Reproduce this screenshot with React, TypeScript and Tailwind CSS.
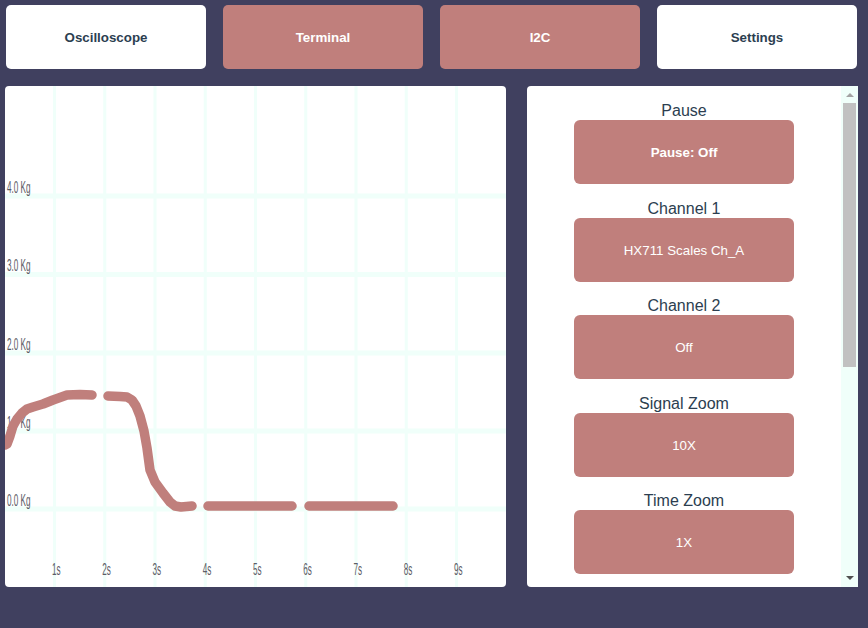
import React from 'react';

const ROSE = '#c07f7c';
const INK = '#2c3e50';

const navItems = [
  { label: 'Oscilloscope', active: false },
  { label: 'Terminal', active: true },
  { label: 'I2C', active: true },
  { label: 'Settings', active: false },
];

const controls = [
  { label: 'Pause', value: 'Pause: Off', bold: true },
  { label: 'Channel 1', value: 'HX711 Scales Ch_A' },
  { label: 'Channel 2', value: 'Off' },
  { label: 'Signal Zoom', value: '10X' },
  { label: 'Time Zoom', value: '1X' },
];

// points are relative to the chart box (501 x 501)
const segments: [number, number][][] = [
  [[0, 359], [2, 358], [5, 350], [8, 340], [12, 333], [17, 327], [22, 323], [28, 321], [38, 318], [48, 314], [62, 309], [75, 308.5], [87, 309]],
  [[103, 310], [115, 310.5], [122, 311], [127, 314], [131, 320], [135, 330], [139, 345], [142, 362], [145, 384], [150, 396], [158, 407], [165, 416], [170, 420], [176, 421], [187, 420]],
  [[203, 420], [287, 420]],
  [[304, 420], [388, 420]],
];

const SQ = 0.48;
const vLines = Array.from({ length: 9 }, (_, i) => 49.5 + i * 50.25);
const hLines = [
  { y: 110, label: '4.0 Kg' },
  { y: 188.5, label: '3.0 Kg' },
  { y: 267, label: '2.0 Kg' },
  { y: 345, label: '1.0 Kg' },
  { y: 423, label: '0.0 Kg' },
];

const Chart = () => (
  <div className="h-[501px] w-[501px] overflow-hidden rounded-[4px] bg-white">
    <svg width="501" height="501" viewBox="0 0 501 501" style={{ fontFamily: '"Liberation Sans", Arial, sans-serif' }}>
      {vLines.map((x) => (
        <rect key={x} x={x - 1.5} y={0} width={3} height={501} fill="#f0fffa" />
      ))}
      {hLines.map((h) => (
        <rect key={h.y} x={0} y={h.y - 2.5} width={501} height={5} fill="#f0fffa" />
      ))}
      <g transform={`scale(${SQ},1)`}>
        {hLines.map((h) => (
          <text key={h.label} x={2 / SQ} y={h.y - 3} fontSize={17} fill="#5c5c66">
            {h.label}
          </text>
        ))}
        {vLines.map((x, i) => (
          <text key={i} x={(x - 2.5) / SQ} y={489} fontSize={17} fill="#5c5c66">
            {i + 1}s
          </text>
        ))}
      </g>
      {segments.map((pts, i) => (
        <polyline
          key={i}
          points={pts.map((p) => p.join(',')).join(' ')}
          fill="none"
          stroke={ROSE}
          strokeWidth={9.5}
          strokeLinecap="round"
          strokeLinejoin="round"
        />
      ))}
    </svg>
  </div>
);

const Scrollbar = () => (
  <div className="flex h-full w-[17px] flex-col items-center bg-[#f0fffa]">
    <div className="flex h-[17px] w-full items-center justify-center">
      <svg width="8" height="5" viewBox="0 0 8 5">
        <path d="M0 5 L4 1 L8 5 Z" fill="#a3a3a3" />
      </svg>
    </div>
    <div className="h-[264px] w-[13px] bg-[#c1c1c1]" />
    <div className="flex-1" />
    <div className="flex h-[17px] w-full items-center justify-center">
      <svg width="8" height="5" viewBox="0 0 8 5">
        <path d="M0 0 L8 0 L4 4 Z" fill="#505050" />
      </svg>
    </div>
  </div>
);

export default function App() {
  return (
    <div className="h-[628px] w-full bg-[#40405f]" style={{ fontFamily: '"Liberation Sans", Arial, sans-serif' }}>
      <nav className="flex gap-[17px] pl-[6px] pt-[5px]">
        {navItems.map((item) => (
          <button
            key={item.label}
            className={
              item.active
                ? 'h-[64px] w-[200px] rounded-[5px] bg-[#c07f7c] pt-[2px] text-[13.333px] font-bold text-white'
                : 'h-[64px] w-[200px] rounded-[5px] bg-white pt-[2px] text-[13.333px] font-bold text-[#2c3e50]'
            }
          >
            {item.label}
          </button>
        ))}
      </nav>

      <div className="mt-[17px] flex gap-[21px] pl-[5px]">
        <Chart />

        <section className="flex h-[501px] w-[331px] overflow-hidden rounded-l-[4px] bg-white">
          <div className="flex flex-1 flex-col items-center pt-[15px]">
            {controls.map((c) => (
              <div key={c.label} className="mb-[14.5px] flex flex-col items-center">
                <p className="h-[19px] text-[16px] leading-[19px]" style={{ color: INK }}>
                  {c.label}
                </p>
                <button
                  className={
                    c.bold
                      ? 'h-[64px] w-[220px] rounded-[6px] bg-[#c07f7c] pt-[2px] text-[13.333px] font-bold text-white'
                      : 'h-[64px] w-[220px] rounded-[6px] bg-[#c07f7c] pt-[2px] text-[13.333px] text-white'
                  }
                >
                  {c.value}
                </button>
              </div>
            ))}
          </div>
          <Scrollbar />
        </section>
      </div>
    </div>
  );
}
